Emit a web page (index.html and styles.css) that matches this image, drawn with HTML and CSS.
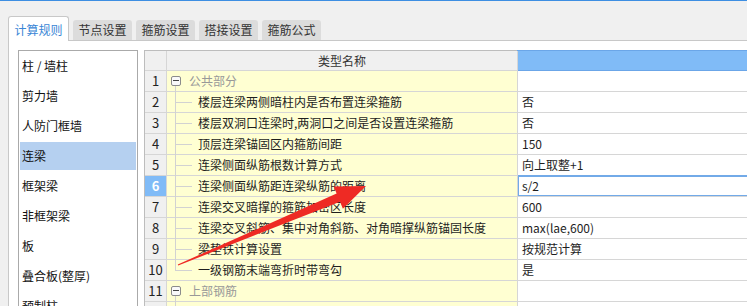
FILE: index.html
```html
<!DOCTYPE html>
<html lang="zh-CN">
<head>
  <meta charset="UTF-8" />
  <title>计算规则</title>
  <link rel="stylesheet" href="styles.css">
</head>
<body>
  <div class="tabs">
    <div class="tab active">计算规则</div>
    <div class="tab">节点设置</div>
    <div class="tab">箍筋设置</div>
    <div class="tab">搭接设置</div>
    <div class="tab">箍筋公式</div>
  </div>

  <div class="panel">
    <ul class="types">
      <li>柱 / 墙柱</li>
      <li>剪力墙</li>
      <li>人防门框墙</li>
      <li class="on">连梁</li>
      <li>框架梁</li>
      <li>非框架梁</li>
      <li>板</li>
      <li>叠合板(整厚)</li>
      <li>预制柱</li>
    </ul>

    <div class="grid">
      <div class="row head">
        <div class="num"></div>
        <div class="name">类型名称</div>
        <div class="val"></div>
      </div>
      <div class="row group">
        <div class="num">1</div>
        <div class="name"><span class="fold"></span>公共部分</div>
        <div class="val"></div>
      </div>
      <div class="row child">
        <div class="num">2</div>
        <div class="name">楼层连梁两侧暗柱内是否布置连梁箍筋</div>
        <div class="val">否</div>
      </div>
      <div class="row child">
        <div class="num">3</div>
        <div class="name">楼层双洞口连梁时,两洞口之间是否设置连梁箍筋</div>
        <div class="val">否</div>
      </div>
      <div class="row child">
        <div class="num">4</div>
        <div class="name">顶层连梁锚固区内箍筋间距</div>
        <div class="val">150</div>
      </div>
      <div class="row child">
        <div class="num">5</div>
        <div class="name">连梁侧面纵筋根数计算方式</div>
        <div class="val">向上取整+1</div>
      </div>
      <div class="row child sel">
        <div class="num">6</div>
        <div class="name">连梁侧面纵筋距连梁纵筋的距离</div>
        <div class="val">s/2</div>
      </div>
      <div class="row child">
        <div class="num">7</div>
        <div class="name">连梁交叉暗撑的箍筋加密区长度</div>
        <div class="val">600</div>
      </div>
      <div class="row child">
        <div class="num">8</div>
        <div class="name">连梁交叉斜筋、集中对角斜筋、对角暗撑纵筋锚固长度</div>
        <div class="val">max(lae,600)</div>
      </div>
      <div class="row child">
        <div class="num">9</div>
        <div class="name">梁垫铁计算设置</div>
        <div class="val">按规范计算</div>
      </div>
      <div class="row child last">
        <div class="num">10</div>
        <div class="name">一级钢筋末端弯折时带弯勾</div>
        <div class="val">是</div>
      </div>
      <div class="row group">
        <div class="num">11</div>
        <div class="name"><span class="fold"></span>上部钢筋</div>
        <div class="val"></div>
      </div>
      <div class="row child">
        <div class="num"></div>
        <div class="name"></div>
        <div class="val"></div>
      </div>
    </div>
  </div>

  <!-- annotation arrow drawn over the screenshot -->
  <svg class="arrow" width="747" height="306" viewBox="0 0 747 306">
    <polygon points="177.8,264.5 336.6,193.4 333.7,186.5 366,186 342.9,208.7 340,201.7 178.2,265.5" fill="#ee2a24" />
  </svg>
</body>
</html>
```

FILE: styles.css
```css
* {
  box-sizing: border-box;
}

body {
  margin: 0;
  width: 747px;
  height: 306px;
  overflow: hidden;
  background: #f0f0f0;
  border-top: 1px solid #3d8ee2;
  font-family: "Noto Sans CJK SC", sans-serif;
  font-size: 12px;
  color: #1e1e1e;
}

.tabs {
  display: flex;
  align-items: flex-end;
  gap: 4px;
  padding: 15px 0 0 8px;
}

.tab {
  width: 59px;
  height: 20px;
  line-height: 20px;
  text-align: center;
  background: #dcdcdc;
  border-radius: 3px 3px 0 0;
  color: #333;
}

.tab.active {
  width: 61px;
  height: 25px;
  padding-top: 1px;
  line-height: 23px;
  background: #fff;
  border: 1px solid #c8c8c8;
  border-bottom: none;
  color: #3a86d6;
  margin-bottom: -1px;
  position: relative;
  z-index: 1;
}

.panel {
  display: flex;
  align-items: flex-start;
  width: 800px;
  margin-left: 8px;
  height: 270px;
  padding: 9px 0 0 9px;
  background: #fff;
  border-top: 1px solid #c8c8c8;
  border-left: 1px solid #c8c8c8;
}

.types {
  flex: none;
  display: flex;
  flex-direction: column;
  gap: 2px;
  width: 120px;
  height: 300px;
  margin: 0;
  padding: 1px 1px 0;
  list-style: none;
  border: 1px solid #aaaaaa;
}

.types li {
  height: 28px;
  line-height: 28px;
  padding-left: 2px;
  color: #111;
}

.types li.on {
  background: #b5d0f0;
}

.grid {
  flex: 1;
  margin-left: 6px;
  border-left: 1px solid #bdbdbd;
  border-top: 1px solid #bdbdbd;
}

.row {
  display: grid;
  grid-template-columns: 22px 351px 1fr;
  height: 21px;
}

.row > div {
  line-height: 20px;
  white-space: nowrap;
  border-right: 1px solid #d6d6d6;
  border-bottom: 1px solid #d6d6d6;
}

.num {
  text-align: center;
  background: #f0f0f0;
  font-size: 13px;
  color: #222;
}

.name {
  position: relative;
  padding-left: 31px;
  background: #ffffd2;
}

.val {
  padding-left: 4px;
  background: #fff;
}

.head {
  height: 20px;
}

.head > div {
  line-height: 19px;
}

.head .name {
  padding-left: 0;
  text-align: center;
  background: #f0f0f0;
  color: #333;
}

.head .val {
  background: #80bbf7;
  border-bottom-color: #6ba6e8;
  box-shadow: -1px -1px 0 #6ba6e8;
}

.sel .num {
  background: #80bbf7;
  color: #fff;
  font-weight: bold;
}

.sel .val {
  box-shadow: 0 0 0 1px #72aae8, inset 0 0 0 1px #72aae8;
}

/* tree */
.group .name {
  display: flex;
  align-items: center;
  padding-left: 4px;
  color: #999;
}

.fold {
  position: relative;
  width: 10px;
  height: 10px;
  margin-right: 8px;
  border: 1px solid #8c8c8c;
  border-radius: 2px;
  background: #fafafa;
}

.fold::after {
  content: "";
  position: absolute;
  left: 1px;
  right: 1px;
  top: 3px;
  height: 1px;
  background: #444;
}

.group .name::before {
  content: "";
  position: absolute;
  left: 8px;
  top: 15px;
  bottom: -1px;
  width: 1px;
  background: #d2d2d2;
}

.child .name::before {
  content: "";
  position: absolute;
  left: 8px;
  top: 0;
  bottom: -1px;
  width: 1px;
  background: #d2d2d2;
}

.child .name::after {
  content: "";
  position: absolute;
  left: 9px;
  top: 10px;
  width: 16px;
  height: 1px;
  background: #d2d2d2;
}

.last .name::before {
  bottom: auto;
  height: 11px;
}

.arrow {
  position: absolute;
  top: 0;
  left: 0;
  pointer-events: none;
}
```
